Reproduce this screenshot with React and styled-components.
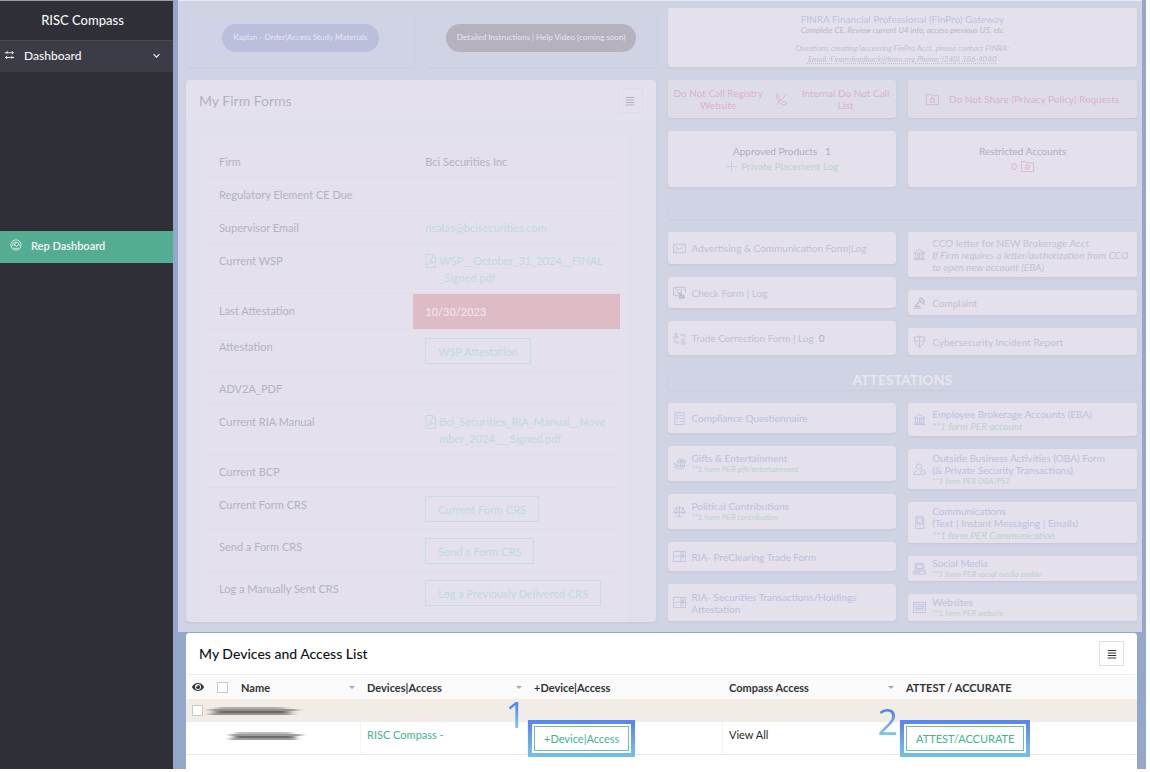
import React, { useState } from 'react';
import styled, { createGlobalStyle } from 'styled-components';
import { FaEye } from 'react-icons/fa';

const GlobalStyle = createGlobalStyle`
  * {
    box-sizing: border-box;
  }
  body {
    margin: 0;
    background: #fff;
    font-family: Lato, "Open Sans", sans-serif;
    font-size: 11px;
    line-height: 17px;
    color: #1f1f24;
  }
  a {
    color: inherit;
    text-decoration: none;
  }
  button {
    font: inherit;
    cursor: pointer;
  }
`;

const Page = styled.div`
  display: flex;
  min-height: calc(100vh - 3px);
  padding-right: 4px;
`;

/* ---------- sidebar ---------- */

const Sidebar = styled.nav`
  flex: 0 0 173px;
  background: #2f2f38;
  border-top: 1px solid #9c9da2;
  color: #f4f4f6;
  font-size: 12px;
`;

const Brand = styled.div`
  height: 39px;
  padding-right: 8px;
  font-size: 13px;
  line-height: 38px;
  font-weight: 500;
  text-align: center;
`;

const NavGroup = styled.button`
  display: flex;
  align-items: center;
  gap: 9px;
  width: 100%;
  height: 32px;
  padding: 0 12px 2px 4px;
  border: 0;
  border-top: 1px solid #4a4a54;
  background: #3c3c47;
  color: inherit;
  font-weight: 500;
  text-align: left;
  span {
    flex: 1;
  }
`;

const NavLink = styled.a`
  display: flex;
  align-items: center;
  gap: 9px;
  height: 32px;
  margin-top: 159px;
  padding: 0 0 4px 10px;
  background: #54ad92;
  font-size: 11px;
  font-weight: 600;
`;

/* ---------- main area ---------- */

const Main = styled.main`
  flex: 1;
  min-width: 0;
  display: flex;
  flex-direction: column;
  background: #93a7c8;
`;

const Dimmed = styled.div`
  display: grid;
  grid-template-columns: 1fr 1fr;
  gap: 12px;
  margin: 0 4px 0 5px;
  padding: 7px 5px 10px 8px;
  border-top: 1px solid #e6eaf3;
  background: #d0d3e3;
`;

const Column = styled.div`
  display: flex;
  flex-direction: column;
  gap: 13px;
  min-width: 0;
`;

const Split = styled.div`
  display: grid;
  grid-template-columns: 1fr 1fr;
  gap: 12px;
`;

const Ghost = styled.div`
  display: flex;
  align-items: center;
  justify-content: center;
  height: ${({ $height }) => $height}px;
  border-radius: 3px;
  box-shadow: 0 1px 2px #c8cbdc;
  color: #e8e6f1;
  font-size: 14px;
  font-weight: 700;
`;

const Pill = styled.button`
  height: 28px;
  padding: 0 11px;
  border: 0;
  border-radius: 14px;
  background: ${({ $dark }) => ($dark ? '#b5b1be' : '#bcbfdc')};
  color: #e8e6f1;
  font-size: 8px;
  font-weight: 400;
`;

const Panel = styled.section`
  flex: 1;
  display: flex;
  flex-direction: column;
  border-radius: 4px;
  background: #e1dfec;
  box-shadow: 0 1px 2px #c4c6d8;
`;

const PanelHeader = styled.header`
  display: flex;
  align-items: center;
  justify-content: space-between;
  height: 41px;
  padding: 0 13px;
  border-radius: 4px 4px 0 0;
  background: ${({ $faded }) => ($faded ? '#e4e1ed' : '#fff')};
  color: ${({ $faded }) => ($faded ? '#b4b2bf' : '#111')};
  h2 {
    margin: 0;
    font-size: 14px;
    font-weight: ${({ $faded }) => ($faded ? 400 : 500)};
  }
`;

const MenuButton = styled.button`
  display: flex;
  align-items: center;
  justify-content: center;
  width: 25px;
  height: 25px;
  padding: 0;
  border: 1px solid ${({ $faded }) => ($faded ? '#dfdde9' : '#dedede')};
  background: none;
  color: ${({ $faded }) => ($faded ? '#b4b2bf' : '#333')};
`;

const FormSheet = styled.div`
  flex: 1;
  margin: 15px 28px 0 13px;
  padding: 9px 8px 8px;
  background: #e4e1ed;
`;

const FormTable = styled.table`
  width: 100%;
  table-layout: fixed;
  border-collapse: separate;
  border-spacing: 0;
  th,
  td {
    padding: 8px 12px 7px;
    border-bottom: 1px solid #dfdde9;
    vertical-align: top;
    text-align: left;
    font-weight: 400;
    color: #b4b2bf;
  }
`;

const DueCell = styled.td`
  && {
    padding: 9px 12px;
    background: #debcc6;
    color: #f0e6ef;
    font-weight: 500;
  }
`;

const FileLink = styled.a`
  display: flex;
  align-items: flex-start;
  color: #bfdadd;
  word-break: break-all;
  svg {
    flex: none;
    margin-top: 2px;
  }
`;

const MailLink = styled.a`
  color: #bfdadd;
`;

const OutlineButton = styled.button`
  display: block;
  height: 26px;
  padding: 0 12px;
  border: 1px solid #c8dde2;
  background: none;
  color: #bfdadd;
`;

/* ---------- right hand cards ---------- */

const tones = {
  gray: '#c3c1cf',
  dark: '#b0aebb',
  blue: '#bcc0dd',
  pink: '#dab4c6',
  green: '#bdd1cc',
};

const Card = styled.div`
  display: flex;
  flex-direction: column;
  justify-content: center;
  align-items: center;
  min-height: ${({ $height }) => $height}px;
  border-radius: 3px;
  background: ${({ $muted }) => ($muted ? '#dfdce9' : '#e4e1ed')};
  box-shadow: 0 1px 2px #c4c6d8;
  color: ${({ $tone }) => tones[$tone]};
  font-size: 10px;
  line-height: 15px;
`;

const LinkCard = styled.a`
  display: flex;
  align-items: center;
  gap: 6px;
  min-height: ${({ $height }) => $height}px;
  padding: 0 5px;
  border-radius: 3px;
  background: #e4e1ed;
  box-shadow: 0 1px 2px #c4c6d8;
  color: ${({ $tone }) => tones[$tone]};
  font-size: 10px;
  line-height: 12px;
  svg {
    flex: none;
  }
`;

const Count = styled.span`
  margin-left: 5px;
  color: ${tones.dark};
`;

const Note = styled.em`
  display: block;
  color: ${({ $tone }) => tones[$tone || 'green']};
  font-size: ${({ $small }) => ($small ? 8 : 10)}px;
  line-height: ${({ $small }) => ($small ? 11 : 12)}px;
`;

const Gateway = styled.div`
  padding-top: 3px;
  text-align: center;
  line-height: 11px;
  a {
    color: #bcc3e0;
  }
  p {
    margin: 0 0 7px;
    font-size: 8px;
    font-style: italic;
    color: #b9b7c4;
  }
  p + p {
    margin: 0;
    color: #c3c1cf;
  }
  p span {
    text-decoration: underline dotted;
  }
`;

const CallRow = styled.div`
  display: grid;
  grid-template-columns: 1fr 26px 1fr;
  align-items: center;
  justify-items: center;
  width: 100%;
  line-height: 12px;
  text-align: center;
  a {
    padding: 0 4px;
  }
`;

const Inline = styled.a`
  display: flex;
  align-items: center;
  gap: ${({ $gap }) => $gap}px;
  color: ${({ $tone }) => tones[$tone]};
`;

/* ---------- devices table ---------- */

const Devices = styled.section`
  flex: 1;
  margin: 1px 9px 0 13px;
  border-radius: 4px 4px 0 0;
  background: #fff;
`;

const GridTable = styled.table`
  width: 100%;
  table-layout: fixed;
  border-collapse: separate;
  border-spacing: 0;
  th,
  td {
    padding: 0 6px;
    text-align: left;
  }
  th {
    height: 25px;
    background: #fafafa;
    border-top: 1px solid #efefef;
    font-weight: 700;
    color: #333;
  }
  th svg {
    display: block;
  }
  tbody td {
    height: 33px;
    padding-top: 4px;
    border-right: 1px solid #f4f4f4;
    border-bottom: 1px solid #e8e8e8;
    vertical-align: top;
  }
  tbody td:last-child {
    border-right: 0;
  }
`;

const GroupRow = styled.tr`
  && td {
    height: 23px;
    padding-top: 0;
    border: 0;
    background: #f1ece6;
    vertical-align: middle;
  }
`;

const Col = styled.col`
  width: ${({ $width }) => $width}px;
`;

const Sortable = styled.span`
  display: flex;
  align-items: center;
  justify-content: space-between;
  &::after {
    content: '';
    border: 3px solid transparent;
    border-top-color: #a8a8a8;
    border-bottom: 0;
  }
`;

const Checkbox = styled.input`
  appearance: none;
  display: block;
  width: 11px;
  height: 11px;
  margin: 0;
  border: 1px solid #c9c9c9;
  background: ${({ checked }) => (checked ? '#54ad92' : '#fff')};
`;

const GroupLabel = styled.div`
  display: flex;
  align-items: center;
  gap: 2px;
`;

const PersonCell = styled.td`
  && {
    padding: 7px 0 0 40px;
  }
`;

const GreenLink = styled.a`
  color: #41b489;
`;

const Callout = styled.div`
  position: relative;
  display: inline-block;
  &::before {
    content: '';
    position: absolute;
    inset: -6px;
    border: 4px solid;
    border-image: linear-gradient(#5b86ee, #74bde8) 1;
    pointer-events: none;
  }
`;

const CalloutNumber = styled.span`
  position: absolute;
  right: calc(100% + 8px);
  bottom: ${({ $raised }) => ($raised ? 14 : 7)}px;
  font-family: "Open Sans", sans-serif;
  font-size: 36px;
  font-weight: 500;
  line-height: 44px;
  color: transparent;
  background: linear-gradient(#4f7df0 20%, #7cc8ea 80%);
  background-clip: text;
`;

const TableButton = styled.button`
  display: block;
  height: 25px;
  padding: 0 9px;
  border: 1px solid #6cc3a3;
  background: #fff;
  color: #41b489;
`;

/* ---------- icons ---------- */

const shapes = {
  mail: <path d="M.5 2.5h13v9H.5zM2 4l5 4 5-4M2 10l3-3M12 10L9 7" />,
  check: (
    <>
      <path d="M6 10.5H.5v-9h13V7M2 3h2M2 9V7M12 3v2" />
      <circle cx="7" cy="6" r="2.5" />
      <path d="M7 13V7.5q1-1 1.500.5V10l3.500.5V13zM9 13V8M8 10h4M8 11.500h4" strokeWidth="1.500" />
    </>
  ),
  trade: (
    <>
      <circle cx="3" cy="2.500" r="1.300" />
      <path d="M.7 6.500q0-2 2.300-2t2.300 2z" />
      <circle cx="11" cy="9" r="1.300" />
      <path d="M8.700 13q0-2 2.300-2t2.300 2zM13 5.500V3H8.500M10 1.500L8.500 3 10 4.500M1.500 8.500V11H6M4.500 9.500L6 11l-1.500 1.500" />
    </>
  ),
  bank: <path d="M1 5.500L7 1.500l6 4zM.5 12.500h13M1.500 11h11M2.500 5.500V11M5 5.500V11M7 5.500V11M9 5.500V11M11.500 5.500V11" />,
  gavel: <path d="M6 4.500l3-3M9.500 8l3-3M6.500 4l3.500 3.500M8.500 2L12 5.500M8 5.500L3 10M11 7.500l1.500 2M.5 13h8M1.500 11h6" strokeWidth="1.500" />,
  shield: <path d="M7 1Q4.500 2.500 1.500 2.500 1 9.500 7 13q6-3.500 5.500-10.500Q9.500 2.500 7 1zM7 1v12M1.500 6.500h11" />,
  list: <path d="M2 .5h10v13H2zM3.500 3.500l1 1 1-2M7 3.500h3.500M3.500 6.500l1 1 1-2M7 7h3.500M4 10.500h1M7 10.500h3.500" />,
  gift: <path d="M5 3.500h8v2H5zM5.500 5.500V10h7V5.500M8 3.500V10M10 3.500V10M9 3.500L7 1.500M9 3.500l2-2M.5 7h2v4h-2M2.500 8l4 2.500M2.500 11q4 3 7 1.500L13 10" />,
  scales: <path d="M7 1v11M4 12.500h6M2 3.500q3-1.500 5 0 2-1.500 5 0M3 3.500L.8 8h4.400zM11 3.500L8.800 8h4.400zM.8 8q2.200 2.500 4.400 0M8.800 8q2.200 2.500 4.400 0" />,
  chart: <path d="M.5 1.500h13v11H.5zM8.500 1.500v11M.5 7.500l2-1 1.500 1L6 6l2.500 1 2-2.500v5M8.500 7h5M11 2v5" />,
  user: (
    <>
      <circle cx="6.500" cy="4" r="3" />
      <path d="M8 12.500H.7Q.7 9 4.500 8.500" />
      <circle cx="10.700" cy="10.300" r="2.700" />
      <path d="M10.700 9v1.500H12" />
    </>
  ),
  phone: <path d="M3 .5h8.500v13H3zM4.500 2.500h5.500v6H4.500zM6.500 11h1.500M5 9l2-2 1.500 2" />,
  laptop: <path d="M2.500 1.500h9v7h-9zM4 3h6v4H4zM.5 10h13v3H.5zM2 11.500h5" />,
  site: <path d="M.5 1.500h13v11H.5zM.5 4h13M2 2.700h1M2.500 6h9v2h-9zM2.500 10h4M8 10h3.500" />,
  lock: <path d="M.5 12.500v-11h4l1 1.500h8v9.500zM5 6.500h4V10H5zM6 6.500V5q1-1 2 0v1.500" />,
  blocked: (
    <>
      <path d="M.5 12.500v-11h4l1 1.500h8v9.500z" />
      <circle cx="7" cy="7.500" r="2.500" />
      <path d="M5.500 9.500l3-4" />
    </>
  ),
  nocall: <path d="M1.500 1.500q2-1.500 3.500 2L4 5q1.500 3 4.500 5l1.500-1q3.500 1 2.500 3-3 2.500-7-1Q.5 6 1.500 1.500zM13 1L1 13" />,
  plus: <path d="M7 1v12M1 7h12" />,
  pdf: <path d="M1 .5h7L10.500 3v10.500H1zM7.500.5v3h3M3 10.500q2.500-2.500 2.500-6 .5 4 3.500 4-3.500 0-6 2" />,
  swap: <path d="M1 3.500h11M10 1.500l2 2-2 2M4 1.500v3M13 9.500H2M4 7.500l-2 2 2 2M10 8v3" strokeWidth="1.200" />,
  gauge: (
    <>
      <circle cx="7" cy="7" r="6" />
      <path d="M3 8q0-4.500 4-4.500T11 8M5 8q0-2.500 2-2.500M7 8L4.500 5.500M7 9l3-2.500M4 10.500q3 2 6 0" />
    </>
  ),
  chevron: <path d="M2.500 5L7 9.500 11.500 5" strokeWidth="1.800" />,
  bars: <path d="M1 2.100h12M1 5.600h12M1 9.100h12M1 12.600h12" strokeWidth="1.400" />,
};

const Icon = ({ name, size = 13 }) => (
  <svg width={size} height={size} viewBox="0 0 14 14" fill="none" stroke="currentColor" strokeWidth="0.9" aria-hidden="true">
    {shapes[name]}
  </svg>
);

// Names are hidden behind a smudge
const Smudge = ({ width }) => (
  <svg width={width} height="12" viewBox="0 0 100 12" preserveAspectRatio="none" role="img" aria-label="Hidden name">
    <defs>
      <filter id="smudge" x="-10%" y="-60%" width="120%" height="220%">
        <feGaussianBlur stdDeviation="4 0.7" />
      </filter>
    </defs>
    <g filter="url(#smudge)" fill="none" stroke="#3c3a38">
      <path d="M12 3H80" strokeWidth="2" opacity=".35" />
      <path d="M5 5H92" strokeWidth="2" opacity=".5" />
      <path d="M10 7H84" strokeWidth="2" opacity=".75" />
      <path d="M5 9H86" strokeWidth="2" opacity=".5" />
    </g>
  </svg>
);

const firmRows = [
  { label: 'Firm', text: 'Bci Securities Inc' },
  { label: 'Regulatory Element CE Due' },
  { label: 'Supervisor Email', mail: 'nsalas@bcisecurities.com' },
  { label: 'Current WSP', file: 'WSP__October_31_2024__FINAL_Signed.pdf' },
  { label: 'Last Attestation', due: '10/30/2023' },
  { label: 'Attestation', button: 'WSP Attestation' },
  { label: 'ADV2A_PDF' },
  { label: 'Current RIA Manual', file: 'Bci_Securities_RIA_Manual__November_2024___Signed.pdf' },
  { label: 'Current BCP' },
  { label: 'Current Form CRS', button: 'Current Form CRS' },
  { label: 'Send a Form CRS', button: 'Send a Form CRS' },
  { label: 'Log a Manually Sent CRS', button: 'Log a Previously Delivered CRS' },
];

const formsLeft = [
  { icon: 'mail', title: 'Advertising & Communication Form|Log', height: 32 },
  { icon: 'check', title: 'Check Form | Log', height: 31 },
  { icon: 'trade', title: 'Trade Correction Form | Log', count: '0', height: 34 },
];

const formsRight = [
  {
    icon: 'bank',
    title: 'CCO letter for NEW Brokerage Acct',
    note: 'If Firm requires a letter/authorization from CCO to open new account (EBA)',
    noteTone: 'gray',
    height: 45,
  },
  { icon: 'gavel', title: 'Complaint', height: 25 },
  { icon: 'shield', title: 'Cybersecurity Incident Report', height: 27 },
];

const attestLeft = [
  { icon: 'list', title: 'Compliance Questionnaire', height: 30 },
  { icon: 'gift', title: 'Gifts & Entertainment', note: '**1 form PER gift/entertainment', small: true, height: 35 },
  { icon: 'scales', title: 'Political Contributions', note: '**1 form PER contribution', small: true, height: 35 },
  { icon: 'chart', title: 'RIA- PreClearing Trade Form', height: 29 },
  { icon: 'chart', title: 'RIA- Securities Transactions/Holdings Attestation', height: 37 },
];

const attestRight = [
  { icon: 'bank', title: 'Employee Brokerage Accounts (EBA)', note: '**1 form PER account', height: 33 },
  {
    icon: 'user',
    title: 'Outside Business Activities (OBA) Form',
    second: '(& Private Security Transactions)',
    note: '**1 form PER OBA/PST',
    small: true,
    height: 40,
  },
  {
    icon: 'phone',
    title: 'Communications',
    second: '(Text | Instant Messaging | Emails)',
    note: '**1 form PER Communication',
    height: 41,
  },
  { icon: 'laptop', title: 'Social Media', note: '**1 form PER social media profile', small: true, height: 25 },
  { icon: 'site', title: 'Websites', note: '**1 form PER website', small: true, height: 27 },
];

const CardList = ({ items, tone }) => (
  <Column>
    {items.map((item) => (
      <LinkCard key={item.title} href="#form" $height={item.height} $tone={tone}>
        <Icon name={item.icon} />
        <div>
          {item.title}
          {item.count && <Count>{item.count}</Count>}
          {item.second && <div>{item.second}</div>}
          {item.note && (
            <Note $small={item.small} $tone={item.noteTone}>
              {item.note}
            </Note>
          )}
        </div>
      </LinkCard>
    ))}
  </Column>
);

const FirmRow = ({ row }) => (
  <tr>
    <th scope="row">{row.label}</th>
    {row.due ? (
      <DueCell>{row.due}</DueCell>
    ) : (
      <td>
        {row.text}
        {row.mail && <MailLink href={`mailto:${row.mail}`}>{row.mail}</MailLink>}
        {row.file && (
          <FileLink href="#file">
            <Icon name="pdf" size={14} />
            <span>{row.file}</span>
          </FileLink>
        )}
        {row.button && <OutlineButton>{row.button}</OutlineButton>}
      </td>
    )}
  </tr>
);

const App = () => {
  const [allChecked, setAllChecked] = useState(false);
  const [groupChecked, setGroupChecked] = useState(false);

  return (
    <>
      <GlobalStyle />
      <Page>
        <Sidebar>
          <Brand>RISC Compass</Brand>
          <NavGroup>
            <Icon name="swap" size={11} />
            <span>Dashboard</span>
            <Icon name="chevron" size={9} />
          </NavGroup>
          <NavLink href="#rep">
            <Icon name="gauge" size={12} />
            Rep Dashboard
          </NavLink>
        </Sidebar>

        <Main>
          <Dimmed>
            <Column>
              <Split>
                <Ghost $height={59}>
                  <Pill>Kaplan - Order|Access Study Materials</Pill>
                </Ghost>
                <Ghost $height={59}>
                  <Pill $dark>Detailed Instructions | Help Video (coming soon)</Pill>
                </Ghost>
              </Split>
              <Panel>
                <PanelHeader $faded>
                  <h2>My Firm Forms</h2>
                  <MenuButton $faded aria-label="Firm forms menu">
                    <Icon name="bars" size={10} />
                  </MenuButton>
                </PanelHeader>
                <FormSheet>
                  <FormTable>
                    <tbody>
                      {firmRows.map((row) => (
                        <FirmRow key={row.label} row={row} />
                      ))}
                    </tbody>
                  </FormTable>
                </FormSheet>
              </Panel>
            </Column>

            <Column>
              <Card $height={59}>
                <Gateway>
                  <a href="#finpro">FINRA Financial Professional (FinPro) Gateway</a>
                  <p>Complete CE, Review current U4 info, access previous U5, etc</p>
                  <p>
                    Questions creating/accessing FinPro Acct, please contact FINRA:
                    <br />
                    <span>Email: Finprofeedback@finra.org Phone: (240) 386-4040</span>
                  </p>
                </Gateway>
              </Card>
              <Split>
                <Card $height={38} $muted $tone="pink">
                  <CallRow>
                    <a href="#registry">Do Not Call Registry Website</a>
                    <Icon name="nocall" />
                    <a href="#internal">Internal Do Not Call List</a>
                  </CallRow>
                </Card>
                <Card $height={38} $muted $tone="pink">
                  <Inline href="#privacy" $gap={10} $tone="pink">
                    <Icon name="lock" />
                    Do Not Share (Privacy Policy) Requests
                  </Inline>
                </Card>
              </Split>
              <Split>
                <Card $height={56} $tone="dark">
                  <div>Approved Products &nbsp; 1</div>
                  <Inline href="#placement" $gap={3} $tone="green">
                    <Icon name="plus" />
                    Private Placement Log
                  </Inline>
                </Card>
                <Card $height={56} $tone="dark">
                  <div>Restricted Accounts</div>
                  <Inline href="#restricted" $gap={4} $tone="pink">
                    0
                    <Icon name="blocked" />
                  </Inline>
                </Card>
              </Split>
              <Ghost $height={19} />
              <Split>
                <CardList items={formsLeft} tone="gray" />
                <CardList items={formsRight} tone="gray" />
              </Split>
              <Ghost $height={22}>ATTESTATIONS</Ghost>
              <Split>
                <CardList items={attestLeft} tone="blue" />
                <CardList items={attestRight} tone="blue" />
              </Split>
            </Column>
          </Dimmed>

          <Devices>
            <PanelHeader>
              <h2>My Devices and Access List</h2>
              <MenuButton aria-label="Devices menu">
                <Icon name="bars" size={10} />
              </MenuButton>
            </PanelHeader>
            <GridTable>
              <colgroup>
                <Col $width={25} />
                <Col $width={24} />
                <Col $width={126} />
                <Col $width={167} />
                <Col $width={195} />
                <Col $width={177} />
                <col />
              </colgroup>
              <thead>
                <tr>
                  <th aria-label="Visibility">
                    <FaEye size={12} />
                  </th>
                  <th>
                    <Checkbox
                      type="checkbox"
                      aria-label="Select all"
                      checked={allChecked}
                      onChange={() => setAllChecked(!allChecked)}
                    />
                  </th>
                  <th>
                    <Sortable>Name</Sortable>
                  </th>
                  <th>
                    <Sortable>Devices|Access</Sortable>
                  </th>
                  <th>+Device|Access</th>
                  <th>
                    <Sortable>Compass Access</Sortable>
                  </th>
                  <th>ATTEST / ACCURATE</th>
                </tr>
              </thead>
              <tbody>
                <GroupRow>
                  <td colSpan={7}>
                    <GroupLabel>
                      <Checkbox
                        type="checkbox"
                        aria-label="Select group"
                        checked={groupChecked}
                        onChange={() => setGroupChecked(!groupChecked)}
                      />
                      <Smudge width={100} />
                    </GroupLabel>
                  </td>
                </GroupRow>
                <tr>
                  <PersonCell colSpan={3}>
                    <Smudge width={82} />
                  </PersonCell>
                  <td>
                    <GreenLink href="#device">RISC Compass -</GreenLink>
                  </td>
                  <td>
                    <Callout>
                      <CalloutNumber $raised>1</CalloutNumber>
                      <TableButton>+Device|Access</TableButton>
                    </Callout>
                  </td>
                  <td>View All</td>
                  <td>
                    <Callout>
                      <CalloutNumber>2</CalloutNumber>
                      <TableButton>ATTEST/ACCURATE</TableButton>
                    </Callout>
                  </td>
                </tr>
              </tbody>
            </GridTable>
          </Devices>
        </Main>
      </Page>
    </>
  );
};

export default App;
